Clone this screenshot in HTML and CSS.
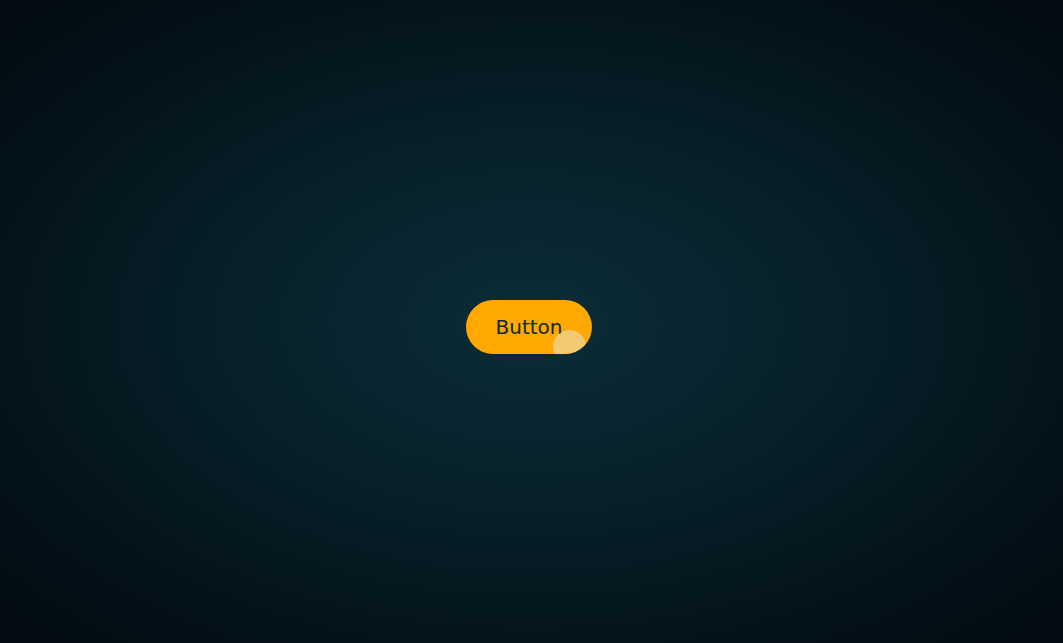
FILE: index.html
```html
<!DOCTYPE html>
<html>
<head>
<meta charset="utf-8">
<link rel="stylesheet" href="styles.css">
</head>
<body>
<main class="stage">
  <button class="btn">Button<span class="ripple"></span></button>
</main>
</body>
</html>
```
FILE: styles.css
```css
html, body {
  margin: 0;
  height: 100%;
}
body {
  background: radial-gradient(ellipse at 50% 50%, #0b2c37 0%, #072029 40%, #031017 80%, #020b10 100%);
  font-family: "DejaVu Sans", sans-serif;
}
.stage {
  height: 100%;
  box-sizing: border-box;
  display: flex;
  align-items: center;
  justify-content: center;
  padding: 11px 5px 0 0;
}
.btn {
  position: relative;
  overflow: hidden;
  width: 126px;
  height: 54px;
  border: none;
  border-radius: 27px;
  background: #ffa800;
  color: #0c2a33;
  font-family: "DejaVu Sans", sans-serif;
  font-size: 20px;
  padding: 0;
}
.ripple {
  position: absolute;
  left: 87px;
  top: 30px;
  width: 33px;
  height: 33px;
  border-radius: 50%;
  background: rgba(230, 230, 210, 0.55);
}
```
